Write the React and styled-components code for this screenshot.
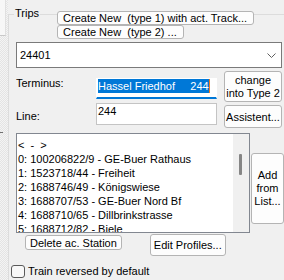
import React from 'react';
import styled, { createGlobalStyle } from 'styled-components';

const GlobalStyle = createGlobalStyle`
  body {
    margin: 0;
    background: #f0f0f0;
    font-family: "Liberation Sans", Arial, sans-serif;
    font-size: 11px;
    color: #000;
  }
`;

const Page = styled.div`
  display: flex;
  width: 284px;
  height: 280px;
  overflow: hidden;
`;

const LeftStrip = styled.div`
  width: 8px;
  flex: none;
  display: flex;
  flex-direction: column;
  background: repeating-conic-gradient(#e4e4e4 0 25%, #f4f4f4 0 50%) 0 0 / 2px 2px;
`;

const StripTop = styled.div`
  width: 5px;
  height: 35px;
  background: #f7f7f7;
  border-bottom: 1px solid #c8c8c8;
  border-right: 1px solid #e0e0e0;
`;

const StripMark = styled.div`
  width: 3px;
  height: 1px;
  margin-top: 96px;
  background: #707070;
`;

const GroupBox = styled.div`
  flex: 1;
  min-width: 0;
  margin-top: 14px;
  border-top: 1px solid #dcdcdc;
  border-left: 1px solid #dcdcdc;
  padding: 0 2px 0 7px;
  display: flex;
  flex-direction: column;
  align-items: flex-start;
`;

const Header = styled.div`
  display: flex;
  align-items: flex-start;
  margin-top: -8px;
`;

const Legend = styled.div`
  margin-left: -2px;
  padding: 0 1px;
  line-height: 13px;
  background: #f0f0f0;
`;

const ButtonStack = styled.div`
  display: flex;
  flex-direction: column;
  align-items: flex-start;
  margin: 4px 0 0 17px;
`;

const Button = styled.div`
  box-sizing: border-box;
  background: #fdfdfd;
  border: 1px solid #b4b4b4;
  border-radius: 3px;
  line-height: ${p => p.$lh || 12}px;
  white-space: pre;
  text-align: center;
  display: flex;
  align-items: center;
  justify-content: center;
  flex: none;
`;

const SmallButton = styled(Button)`
  height: 14px;
  padding: 0 6px 0 5px;
`;

const Combo = styled.div`
  box-sizing: border-box;
  width: 266px;
  height: 26px;
  margin-top: 3px;
  background: #fff;
  border: 1px solid #7a7a7a;
  display: flex;
  align-items: center;
  justify-content: space-between;
  padding: 0 5px 0 3px;
`;

const Form = styled.div`
  display: grid;
  grid-template-columns: 73px 121px 58px;
  column-gap: 7px;
  row-gap: 1px;
  margin-top: 3px;
`;

const Label = styled.div`
  line-height: 13px;
  margin-top: ${p => p.$top}px;
`;

const Edit = styled.div`
  box-sizing: border-box;
  height: ${p => p.$h}px;
  margin-top: ${p => p.$top || 0}px;
  background: #fff;
  border: 1px solid ${p => (p.$focus ? '#fff' : '#c4c4c4')};
  border-bottom: ${p => (p.$focus ? '2px solid #0078d7' : '1px solid #c4c4c4')};
  padding: 0 0 0 1px;
  line-height: 14px;
  white-space: pre;
`;

const Selected = styled.span`
  display: inline-block;
  background: #0078d7;
  color: #fff;
  line-height: 14px;
`;

const Caret = styled.span`
  display: inline-block;
  width: 1px;
  height: 14px;
  vertical-align: top;
  background: #f07a1e;
`;

const SideButton = styled(Button)`
  height: ${p => p.$h}px;
  margin-top: ${p => p.$top || 0}px;
  padding: 0;
`;

const ListRow = styled.div`
  display: flex;
  align-items: flex-start;
  margin-top: 5px;
`;

const ListBox = styled.div`
  box-sizing: border-box;
  width: 234px;
  height: 100px;
  background: #fff;
  border: 1px solid #828790;
  display: flex;
  overflow: hidden;
`;

const Items = styled.div`
  flex: 1;
  padding: 4px 0 0 1px;
  line-height: 14px;
  white-space: pre;
  overflow: hidden;
`;

const ScrollTrack = styled.div`
  width: 16px;
  flex: none;
  background: #f0f0f0;
  display: flex;
  justify-content: center;
`;

const Thumb = styled.div`
  width: 3px;
  height: 21px;
  margin: 20px 0 0 -1px;
  background: #868686;
  border-radius: 1px;
`;

const AddButton = styled(Button)`
  width: 33px;
  height: 71px;
  margin: 20px 0 0 1px;
  line-height: 13px;
`;

const BottomRow = styled.div`
  display: flex;
  align-items: flex-start;
  margin-top: 1px;
`;

const DeleteButton = styled(Button)`
  height: 15px;
  margin: 1px 0 0 9px;
  padding: 0 4px;
`;

const EditButton = styled(Button)`
  height: 22px;
  margin-left: 28px;
  padding: 0 3px;
`;

const CheckRow = styled.label`
  display: flex;
  align-items: center;
  margin: 9px 0 0 -5px;
  line-height: 13px;
`;

const CheckBox = styled.span`
  box-sizing: border-box;
  width: 14px;
  height: 13px;
  margin-right: 3px;
  border: 1px solid #5a5a5a;
  border-radius: 3px;
  background: #f8f8f8;
`;

const stations = [
  '<  -  >',
  '0: 100206822/9 - GE-Buer Rathaus',
  '1: 1523718/44 - Freiheit',
  '2: 1688746/49 - Königswiese',
  '3: 1688707/53 - GE-Buer Nord Bf',
  '4: 1688710/65 - Dillbrinkstrasse',
  '5: 1688712/82 - Biele',
];

export default function App() {
  return (
    <Page>
      <GlobalStyle />
      <LeftStrip>
        <StripTop />
        <StripMark />
      </LeftStrip>
      <GroupBox>
        <Header>
          <Legend>Trips</Legend>
          <ButtonStack>
            <SmallButton>{'Create New  (type 1) with act. Track...'}</SmallButton>
            <SmallButton>{'Create New  (type 2) ...'}</SmallButton>
          </ButtonStack>
        </Header>
        <Combo>
          <span>24401</span>
          <svg width="9" height="5" viewBox="0 0 9 5">
            <polyline points="0.5,0.5 4.5,4.5 8.5,0.5" fill="none" stroke="#606060" strokeWidth="1" />
          </svg>
        </Combo>
        <Form>
          <Label $top={6}>Terminus:</Label>
          <Edit $h={21} $top={7} $focus>
            <Selected>{'Hassel Friedhof     244'}</Selected>
            <Caret />
          </Edit>
          <SideButton $h={31} $lh={13}>change<br />into Type 2</SideButton>
          <Label $top={7}>Line:</Label>
          <Edit $h={22}>244</Edit>
          <SideButton $h={23} $top={2}>Assistent...</SideButton>
        </Form>
        <ListRow>
          <ListBox>
            <Items>
              {stations.map(s => (
                <div key={s}>{s}</div>
              ))}
            </Items>
            <ScrollTrack>
              <Thumb />
            </ScrollTrack>
          </ListBox>
          <AddButton>Add<br />from<br />List...</AddButton>
        </ListRow>
        <BottomRow>
          <DeleteButton>Delete ac. Station</DeleteButton>
          <EditButton>Edit Profiles...</EditButton>
        </BottomRow>
        <CheckRow>
          <CheckBox />
          Train reversed by default
        </CheckRow>
      </GroupBox>
    </Page>
  );
}
